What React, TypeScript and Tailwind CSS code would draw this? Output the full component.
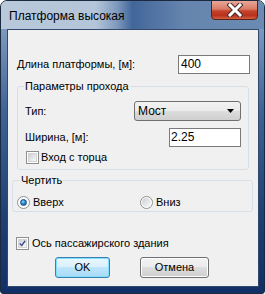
import React from "react";

function Checkbox({ checked }: { checked?: boolean }) {
  return (
    <div className="w-[13px] h-[13px] border border-[#8e8f8f] bg-white p-[1px] shrink-0">
      <div className="w-full h-full bg-[linear-gradient(135deg,#cbcfd5_0%,#e3e5e8_50%,#f7f7f7_100%)] border border-[#d4d4d4] flex items-center justify-center">
        {checked && (
          <svg width="9" height="9" viewBox="0 0 9 9" className="block">
            <path d="M1 4.5 L3.5 7 L8 1" stroke="#3b4d8a" strokeWidth="1.8" fill="none" />
          </svg>
        )}
      </div>
    </div>
  );
}

function Radio({ checked }: { checked?: boolean }) {
  return (
    <div className="w-[13px] h-[13px] rounded-full border border-[#8e8f8f] bg-white flex items-center justify-center shrink-0">
      {checked ? (
        <div className="w-[7px] h-[7px] rounded-full bg-[radial-gradient(circle_at_40%_35%,#8fd3f8_0%,#2a8ad0_45%,#0d4f8f_100%)] border border-[#1a4c80]" />
      ) : (
        <div className="w-[9px] h-[9px] rounded-full bg-[linear-gradient(135deg,#c9ccd1_0%,#e6e7e9_55%,#fafafa_100%)]" />
      )}
    </div>
  );
}

export default function App() {
  const font = { fontFamily: '"Liberation Sans", Arial, sans-serif' };
  return (
    <div className="w-[265px] h-[294px] bg-white" style={font}>
      <div className="w-[265px] h-[294px] rounded-t-[7px] rounded-b-[3px] border border-[#1c2a40] bg-[linear-gradient(180deg,#a9bcd4_0px,#7b97bd_30px,#3f6396_110px,#1d3f74_220px,#112f66_294px)] flex flex-col overflow-hidden">
        <div className="h-[28px] shrink-0 flex items-start justify-between bg-[linear-gradient(90deg,#b9c9db_0%,#b4c5d9_36%,#7f9abd_44%,#42669a_50%,#4e70a0_56%,#6585ae_70%,#6c8bb3_100%)]">
          <div className="pl-[8px] pt-[8px] text-[12px] leading-[15px] text-black">Платформа высокая</div>
          <div className="mr-[6px] -mt-[1px] w-[47px] h-[20px] rounded-b-[4px] border border-[#5a2218] bg-[linear-gradient(180deg,#e8a898_0%,#d97b66_45%,#c5432c_55%,#b8321e_80%,#d0603f_100%)] flex items-center justify-center">
            <svg width="16" height="14" viewBox="0 0 16 14">
              <path d="M3 2 L13 12 M13 2 L3 12" stroke="#4a2a25" strokeWidth="5" strokeLinecap="square" />
              <path d="M3 2 L13 12 M13 2 L3 12" stroke="#ffffff" strokeWidth="3" strokeLinecap="square" />
            </svg>
          </div>
        </div>
        <div className="ml-[6px] w-[252px] h-[258px] shrink-0 border border-[#33496b] bg-[#f0f0f0] text-[11px] leading-[13px] text-black">
          <div className="flex items-center pl-[9px] pr-[8px] mt-[25px]">
            <span>Длина платформы, [м]:</span>
            <div className="ml-auto w-[72px] h-[19px] border border-[#7a7a7a] bg-white pl-[2px] flex items-center text-[12px]">400</div>
          </div>
          <fieldset className="ml-[9px] mt-[6px] w-[232px] border border-[#d5dfe5] rounded-[3px] pl-[7px] pr-[7px] pb-[5px]">
            <legend className="px-[1px] -ml-[1px]">Параметры прохода</legend>
            <div className="flex items-center mt-[8px]">
              <span>Тип:</span>
              <div className="ml-auto w-[107px] h-[20px] rounded-[3px] border border-[#707070] bg-[linear-gradient(180deg,#f2f2f2_0%,#ebebeb_50%,#dddddd_50%,#cfcfcf_100%)] flex items-center pl-[3px] pr-[6px]">
                <span className="text-[12px]">Мост</span>
                <svg width="7" height="4" viewBox="0 0 7 4" className="ml-auto">
                  <path d="M0 0 L7 0 L3.5 4 Z" fill="#000" />
                </svg>
              </div>
            </div>
            <div className="flex items-center mt-[7px]">
              <span>Ширина, [м]:</span>
              <div className="ml-auto w-[72px] h-[19px] border border-[#7a7a7a] bg-white pl-[1px] flex items-center text-[12px]">2.25</div>
            </div>
            <div className="flex items-center mt-[4px] ml-[1px] gap-[2px]">
              <Checkbox />
              <span>Вход с торца</span>
            </div>
          </fieldset>
          <fieldset className="ml-[4px] mt-[4px] w-[241px] border border-[#d5dfe5] rounded-[3px] pl-[4px] pb-[2px]">
            <legend className="px-[1px] ml-[3px]">Чертить</legend>
            <div className="grid grid-cols-[123px_1fr] items-center mt-[9px]">
              <div className="flex items-center gap-[3px]">
                <Radio checked />
                <span>Вверх</span>
              </div>
              <div className="flex items-center gap-[3px]">
                <Radio />
                <span>Вниз</span>
              </div>
            </div>
          </fieldset>
          <div className="flex items-center gap-[3px] ml-[8px] mt-[25px]">
            <Checkbox checked />
            <span>Ось пассажирского здания</span>
          </div>
          <div className="flex items-center mt-[7px] ml-[47px]">
            <div className="w-[55px] h-[21px] rounded-[3px] border border-[#3c7fb1] bg-[linear-gradient(180deg,#eaf6fd_0%,#d9f0fc_50%,#bee6fd_50%,#a7d9f5_100%)] shadow-[inset_0_0_0_1px_#7ee0ff] flex items-center justify-center">OK</div>
            <div className="ml-[30px] w-[69px] h-[21px] rounded-[3px] border border-[#707070] bg-[linear-gradient(180deg,#f2f2f2_0%,#ebebeb_50%,#dddddd_50%,#cfcfcf_100%)] shadow-[inset_0_0_0_1px_#fcfcfc] flex items-center justify-center">Отмена</div>
          </div>
        </div>
      </div>
    </div>
  );
}
